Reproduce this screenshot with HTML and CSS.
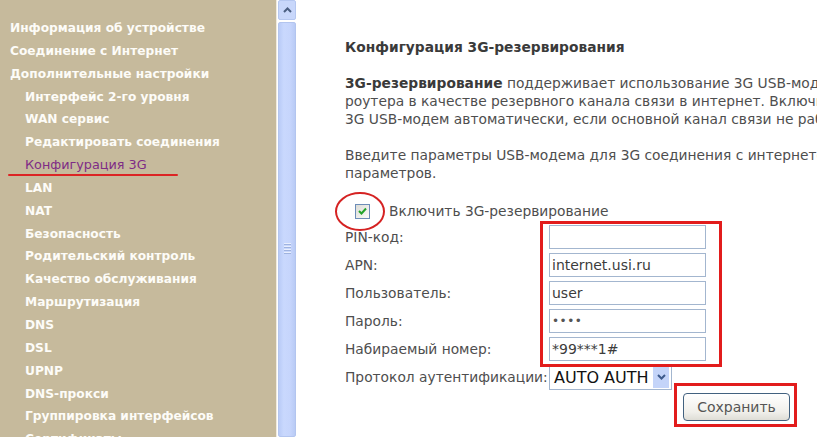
FILE: index.html
```html
<!DOCTYPE html>
<html lang="ru">
<head>
    <meta charset="UTF-8">
    <title>Конфигурация 3G</title>
    <link rel="stylesheet" href="styles.css">
</head>
<body>
    <div class="page">
        <nav class="sidebar">
            <a class="menu-item">Информация об устройстве</a>
            <a class="menu-item">Соединение с Интернет</a>
            <a class="menu-item">Дополнительные настройки</a>
            <a class="menu-item sub">Интерфейс 2-го уровня</a>
            <a class="menu-item sub">WAN сервис</a>
            <a class="menu-item sub">Редактировать соединения</a>
            <a class="menu-item sub active">Конфигурация 3G</a>
            <a class="menu-item sub">LAN</a>
            <a class="menu-item sub">NAT</a>
            <a class="menu-item sub">Безопасность</a>
            <a class="menu-item sub">Родительский контроль</a>
            <a class="menu-item sub">Качество обслуживания</a>
            <a class="menu-item sub">Маршрутизация</a>
            <a class="menu-item sub">DNS</a>
            <a class="menu-item sub">DSL</a>
            <a class="menu-item sub">UPNP</a>
            <a class="menu-item sub">DNS-прокси</a>
            <a class="menu-item sub">Группировка интерфейсов</a>
            <a class="menu-item sub">Сертификаты</a>
        </nav>

        <div class="scrollbar">
            <div class="scroll-btn">
                <svg width="9" height="6" viewBox="0 0 9 6"><path d="M1 5 L4.5 1.5 L8 5" fill="none" stroke="#4b5f82" stroke-width="2"/></svg>
            </div>
            <div class="scroll-thumb"><span class="grip"></span></div>
        </div>

        <main class="content">
            <h1 class="title">Конфигурация 3G-резервирования</h1>
            <p class="text">
                <b>3G-резервирование</b> поддерживает использование 3G USB-модема, подключенного к USB-порту<br>
                роутера в качестве резервного канала связи в интернет. Включите эту функцию, чтобы роутер использовал<br>
                3G USB-модем автоматически, если основной канал связи не работает.
            </p>
            <p class="text">
                Введите параметры USB-модема для 3G соединения с интернетом и нажмите «Сохранить» для применения<br>
                параметров.
            </p>

            <form class="form">
                <div class="enable-row">
                    <span class="check">
                        <svg width="9" height="8" viewBox="0 0 9 8"><path d="M1 4 L3.5 6.5 L8 1.5" fill="none" stroke="#22a32a" stroke-width="2"/></svg>
                    </span>
                    <span>Включить 3G-резервирование</span>
                    <span class="mark-circle"></span>
                </div>

                <div class="fields">
                    <label>PIN-код:</label>
                    <input class="field" type="text" value="">
                    <label>APN:</label>
                    <input class="field" type="text" value="internet.usi.ru">
                    <label>Пользователь:</label>
                    <input class="field" type="text" value="user">
                    <label>Пароль:</label>
                    <input class="field pass" type="password" value="1234">
                    <label>Набираемый номер:</label>
                    <input class="field" type="text" value="*99***1#">
                    <label>Протокол аутентификации:</label>
                    <div class="select">
                        <span>AUTO AUTH</span>
                        <span class="select-btn">
                            <svg width="9" height="6" viewBox="0 0 9 6"><path d="M1 1 L4.5 4.5 L8 1" fill="none" stroke="#3d5a8c" stroke-width="2"/></svg>
                        </span>
                    </div>
                </div>

                <div class="actions">
                    <button type="button" class="save">Сохранить</button>
                </div>

                <span class="mark-box mark-fields"></span>
                <span class="mark-box mark-save"></span>
            </form>
        </main>
    </div>
</body>
</html>
```

FILE: styles.css
```css
body {
    margin: 0;
    font-family: "DejaVu Sans", Verdana, sans-serif;
    background: white;
}

.page {
    display: flex;
    height: 100vh;
    overflow: hidden;
}

/* left menu */
.sidebar {
    width: 276px;
    flex-shrink: 0;
    background-color: #c6ba9c;
    padding-top: 17px;
    display: flex;
    flex-direction: column;
}

.menu-item {
    display: block;
    color: #fdfcf8;
    font-size: 12.2px;
    font-weight: bold;
    line-height: 22.85px;
    padding-left: 10px;
    white-space: nowrap;
}

.menu-item.sub {
    padding-left: 25px;
}

.menu-item.active {
    color: #7e2c86;
    font-weight: normal;
    font-size: 12.8px;
    position: relative;
}

.menu-item.active::after {
    content: "";
    position: absolute;
    left: 8px;
    top: 20px;
    width: 170px;
    height: 2px;
    background: #dc2424;
    border-radius: 1px;
}

/* scrollbar */
.scrollbar {
    width: 21px;
    flex-shrink: 0;
    border-left: 1px solid #efeadf;
    display: flex;
    flex-direction: column;
    gap: 2px;
    padding: 0 1px;
    box-sizing: border-box;
}

.scroll-btn {
    height: 18px;
    background: #c8d7fb;
    border: 1px solid #b5c7f0;
    border-radius: 2px;
    display: flex;
    align-items: center;
    justify-content: center;
}

.scroll-thumb {
    flex: 1;
    background: linear-gradient(90deg, #b9cbf7, #c9d8fd 30%, #c6d5fc 70%, #b9cbf5);
    border: 1px solid #b3c5ef;
    border-radius: 2px;
    position: relative;
}

.grip {
    position: absolute;
    left: 5px;
    top: 220px;
    width: 7px;
    height: 12px;
    background: repeating-linear-gradient(#e8eefd 0 1px, #9fb3df 1px 2px, transparent 2px 3px);
}

/* content */
.content {
    flex: 1;
    padding-left: 48px;
    padding-top: 38px;
    overflow: hidden;
    color: #4e4e4e;
    font-size: 13.8px;
}

.title {
    font-size: 13.8px;
    line-height: 18px;
    margin: 0 0 18px;
    color: #3a3a3a;
}

.text {
    margin: 0 0 18px;
    line-height: 18px;
    white-space: nowrap;
}

.text b {
    color: #3a3a3a;
}

.form {
    position: relative;
    margin-top: 18px;
}

.enable-row {
    display: flex;
    align-items: center;
    height: 22px;
    position: relative;
}

.check {
    width: 13px;
    height: 13px;
    margin-left: 10px;
    margin-right: 19px;
    border: 1px solid #6d8db8;
    background: linear-gradient(135deg, #dcdcd6, #fbfbf9);
    display: flex;
    align-items: center;
    justify-content: center;
}

.mark-circle {
    position: absolute;
    left: -10px;
    top: -8px;
    width: 46px;
    height: 35px;
    border: 2px solid #d52222;
    border-radius: 50%;
}

.fields {
    display: grid;
    grid-template-columns: 204px 157px;
    grid-auto-rows: 24px;
    row-gap: 4px;
    margin-top: 3px;
    align-items: center;
    white-space: nowrap;
}

.field {
    box-sizing: border-box;
    height: 24px;
    width: 157px;
    margin: 0;
    border: 1px solid #a3b6cf;
    padding: 0 2px;
    font-family: "DejaVu Sans", sans-serif;
    font-size: 14px;
    color: #3c3c3c;
    outline: none;
}

.field.pass {
    font-size: 12px;
    letter-spacing: 0.5px;
    color: #555;
}

.select {
    box-sizing: border-box;
    width: 123px;
    height: 25px;
    border: 1px solid #a3b6cf;
    display: flex;
    align-items: center;
    justify-content: space-between;
    padding: 0 2px 0 4px;
    font-size: 16px;
    color: #111;
}

.select-btn {
    width: 16px;
    height: 21px;
    background: #c4d4f9;
    display: flex;
    align-items: center;
    justify-content: center;
}

.actions {
    padding-left: 338px;
    margin-top: 4px;
}

.save {
    width: 107px;
    height: 28px;
    border: 1px solid #42617f;
    border-radius: 4px;
    background: linear-gradient(#ffffff, #f0efea 70%, #deddd6);
    font-family: "DejaVu Sans", sans-serif;
    font-size: 14px;
    color: #555;
}

.mark-box {
    position: absolute;
    border: 3px solid #e21c1c;
}

.mark-fields {
    left: 195px;
    top: 21px;
    width: 176px;
    height: 140px;
}

.mark-save {
    left: 329px;
    top: 183px;
    width: 117px;
    height: 38px;
}
```
